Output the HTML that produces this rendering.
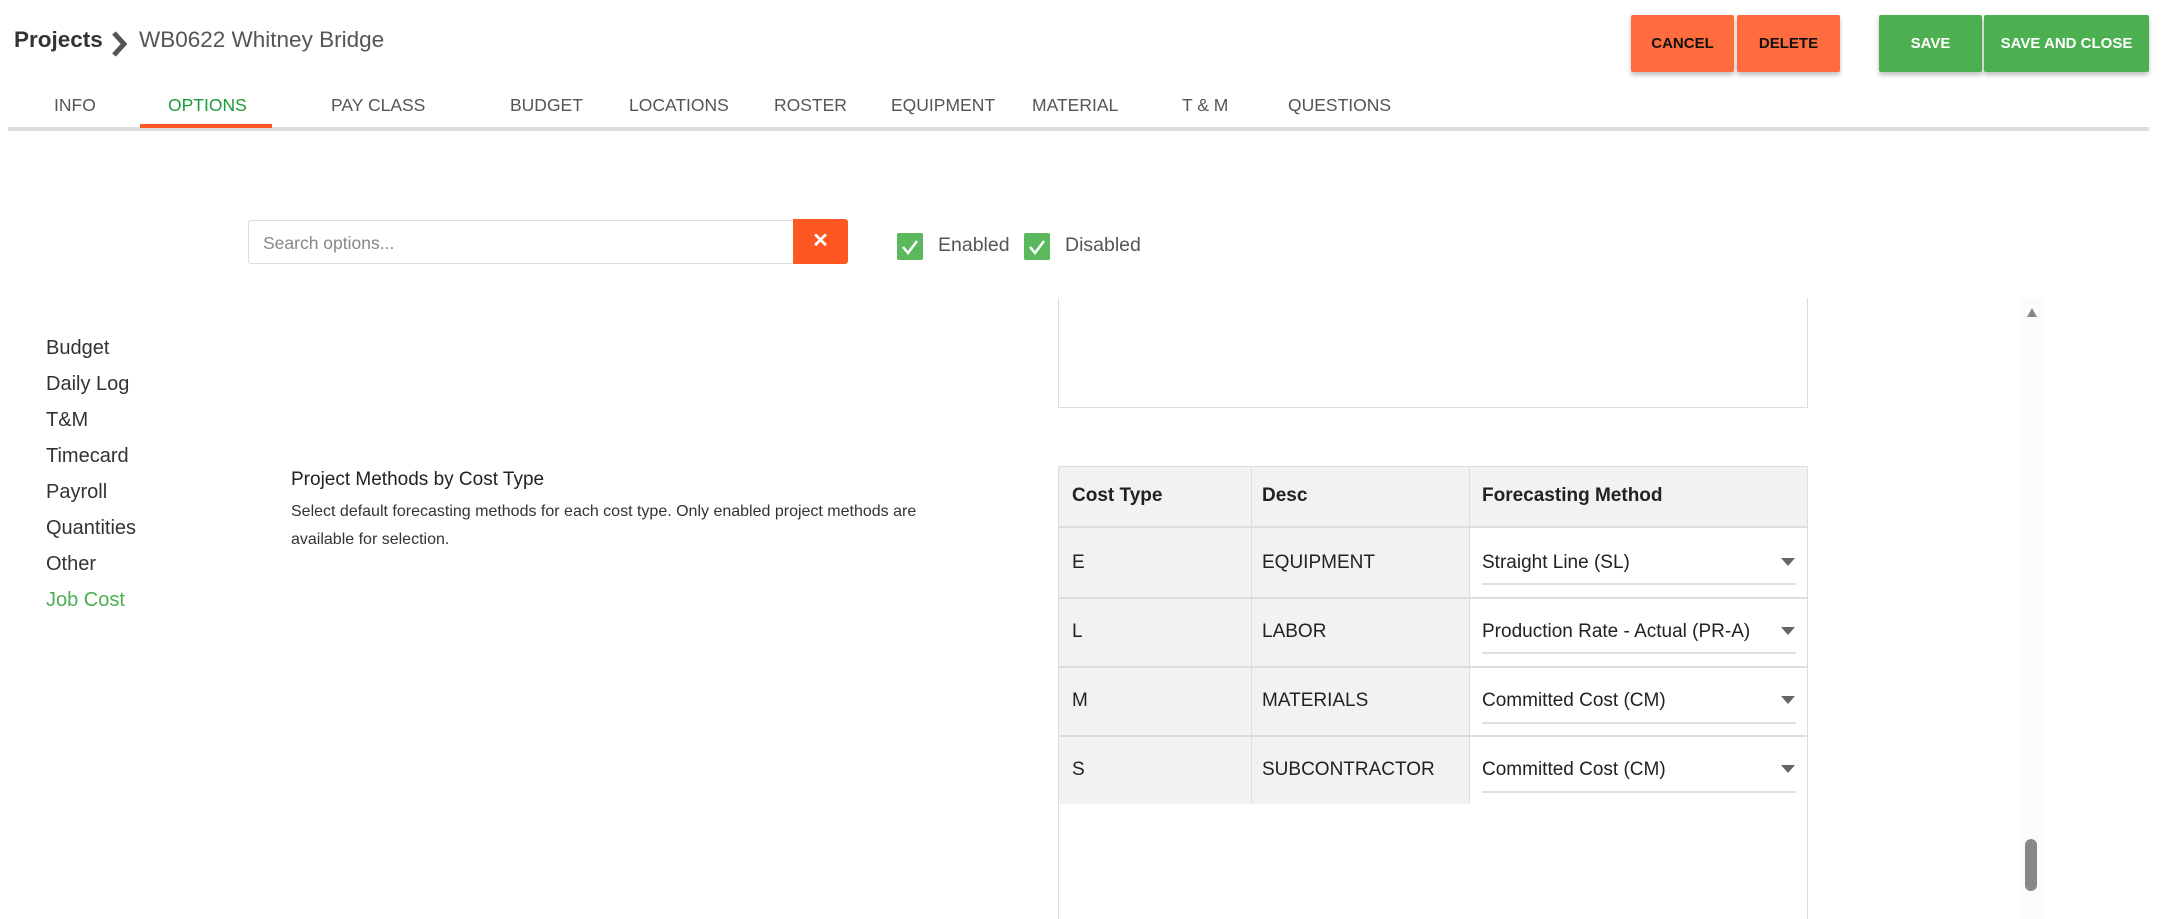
<!DOCTYPE html>
<html><head><meta charset="utf-8"><style>
*{box-sizing:border-box;margin:0;padding:0}
html{overflow:hidden;height:919px}
body{width:2163px;height:919px;overflow:hidden;background:#fff;font-family:"Liberation Sans",sans-serif;position:relative;color:#333}
.a{position:absolute;white-space:nowrap}
.tab{position:absolute;top:95px;font-size:17.5px;color:#555}
.btn{position:absolute;top:15px;height:57px;font-size:15px;font-weight:bold;display:flex;align-items:center;justify-content:center;border-radius:2px;box-shadow:0 3px 5px rgba(0,0,0,.25)}
.o{background:#ff6d3f;color:#111}.g{background:#4caf50;color:#fff}
.menu{position:absolute;left:46px;font-size:20px;color:#333}
.cb{position:absolute;top:233px;width:26px;height:27px;background:#5cb85c;border-radius:2px}
.cell{position:absolute;font-size:19px;color:#222}
</style></head><body>
<div class="a" style="left:14px;top:27px;font-size:22.5px;font-weight:bold;color:#333">Projects</div>
<svg class="a" style="left:111px;top:31px" width="16" height="26" viewBox="0 0 16 26"><path d="M3 2 L13 13 L3 24" stroke="#555" stroke-width="5" fill="none"/></svg>
<div class="a" style="left:139px;top:27px;font-size:22.5px;color:#555">WB0622 Whitney Bridge</div>
<div class="tab" style="left:54px">INFO</div>
<div class="tab" style="left:168px;color:#1a9a3a">OPTIONS</div>
<div class="tab" style="left:331px">PAY CLASS</div>
<div class="tab" style="left:510px">BUDGET</div>
<div class="tab" style="left:629px">LOCATIONS</div>
<div class="tab" style="left:774px">ROSTER</div>
<div class="tab" style="left:891px">EQUIPMENT</div>
<div class="tab" style="left:1032px">MATERIAL</div>
<div class="tab" style="left:1182px">T &amp; M</div>
<div class="tab" style="left:1288px">QUESTIONS</div>
<div class="a" style="left:8px;top:127px;width:2141px;height:4px;background:#ddd"></div>
<div class="a" style="left:140px;top:124px;width:132px;height:4px;background:#ff5722"></div>
<div class="btn o" style="left:1631px;width:103px">CANCEL</div>
<div class="btn o" style="left:1737px;width:103px">DELETE</div>
<div class="btn g" style="left:1879px;width:103px">SAVE</div>
<div class="btn g" style="left:1984px;width:165px">SAVE AND CLOSE</div>

<div class="a" style="left:248px;top:220px;width:547px;height:44px;border:1px solid #ddd;border-radius:3px"></div>
<div class="a" style="left:263px;top:233px;font-size:17.5px;color:#888">Search options...</div>
<div class="a" style="left:793px;top:219px;width:55px;height:45px;background:#ff5722;border-radius:0 3px 3px 0;color:#fff;font-weight:bold;font-size:20px;text-align:center;line-height:44px">✕</div>
<div class="cb" style="left:897px"><svg width="26" height="27"><path d="M6 14 L11 20 L20 8" stroke="#fff" stroke-width="2.5" fill="none"/></svg></div>
<div class="a" style="left:938px;top:234px;font-size:19.5px;color:#555">Enabled</div>
<div class="cb" style="left:1024px"><svg width="26" height="27"><path d="M6 14 L11 20 L20 8" stroke="#fff" stroke-width="2.5" fill="none"/></svg></div>
<div class="a" style="left:1065px;top:234px;font-size:19.5px;color:#555">Disabled</div>

<div class="menu" style="top:337px">Budget</div>
<div class="menu" style="top:373px">Daily Log</div>
<div class="menu" style="top:409px">T&amp;M</div>
<div class="menu" style="top:445px">Timecard</div>
<div class="menu" style="top:481px">Payroll</div>
<div class="menu" style="top:517px">Quantities</div>
<div class="menu" style="top:553px">Other</div>
<div class="menu" style="top:589px;color:#4caf50">Job Cost</div>

<div class="a" style="left:291px;top:469px;font-size:19px;color:#222">Project Methods by Cost Type</div>
<div class="a" style="left:291px;top:498px;font-size:16px;color:#333;line-height:28px;white-space:normal;width:680px">Select default forecasting methods for each cost type. Only enabled project methods are available for selection.</div>

<div class="a" style="left:1058px;top:298px;width:750px;height:110px;border:1px solid #ddd;border-top:none"></div>
<div class="a" style="left:1058px;top:466px;width:750px;height:453px;border:1px solid #ddd;border-bottom:none"></div>
<div class="a" style="left:1059px;top:467px;width:748px;height:61px;background:#f2f2f2;border-bottom:2px solid #ddd"></div>
<div class="a" style="left:1059px;top:528px;width:410px;height:276px;background:#f2f2f2"></div>
<div class="a" style="left:1251px;top:467px;width:1px;height:337px;background:#ddd"></div>
<div class="a" style="left:1469px;top:467px;width:1px;height:337px;background:#ddd"></div>
<div class="a" style="left:1059px;top:597px;width:748px;height:2px;background:#ddd"></div>
<div class="a" style="left:1059px;top:666px;width:748px;height:2px;background:#ddd"></div>
<div class="a" style="left:1059px;top:735px;width:748px;height:2px;background:#ddd"></div>
<div class="cell" style="left:1072px;top:485px;font-weight:bold">Cost Type</div>
<div class="cell" style="left:1262px;top:485px;font-weight:bold">Desc</div>
<div class="cell" style="left:1482px;top:485px;font-weight:bold">Forecasting Method</div>

<div class="cell" style="left:1072px;top:552px">E</div><div class="cell" style="left:1262px;top:552px">EQUIPMENT</div><div class="cell" style="left:1482px;top:552px">Straight Line (SL)</div>
<div class="cell" style="left:1072px;top:621px">L</div><div class="cell" style="left:1262px;top:621px">LABOR</div><div class="cell" style="left:1482px;top:621px">Production Rate - Actual (PR-A)</div>
<div class="cell" style="left:1072px;top:690px">M</div><div class="cell" style="left:1262px;top:690px">MATERIALS</div><div class="cell" style="left:1482px;top:690px">Committed Cost (CM)</div>
<div class="cell" style="left:1072px;top:759px">S</div><div class="cell" style="left:1262px;top:759px">SUBCONTRACTOR</div><div class="cell" style="left:1482px;top:759px">Committed Cost (CM)</div>
<div class="a" style="left:1482px;top:583px;width:314px;height:2px;background:#e0e0e0"></div>
<div class="a" style="left:1482px;top:652px;width:314px;height:2px;background:#e0e0e0"></div>
<div class="a" style="left:1482px;top:722px;width:314px;height:2px;background:#e0e0e0"></div>
<div class="a" style="left:1482px;top:791px;width:314px;height:2px;background:#e0e0e0"></div>
<svg class="a" style="left:1781px;top:558px" width="14" height="9"><path d="M0 0H14L7 8Z" fill="#666"/></svg>
<svg class="a" style="left:1781px;top:627px" width="14" height="9"><path d="M0 0H14L7 8Z" fill="#666"/></svg>
<svg class="a" style="left:1781px;top:696px" width="14" height="9"><path d="M0 0H14L7 8Z" fill="#666"/></svg>
<svg class="a" style="left:1781px;top:765px" width="14" height="9"><path d="M0 0H14L7 8Z" fill="#666"/></svg>

<div class="a" style="left:2021px;top:298px;width:22px;height:621px;background:#fbfbfb"></div>
<svg class="a" style="left:2025px;top:306px" width="14" height="12"><path d="M2 11H12L7 2Z" fill="#888"/></svg>
<div class="a" style="left:2025px;top:839px;width:12px;height:52px;background:#888;border-radius:6px"></div>
</body></html>
